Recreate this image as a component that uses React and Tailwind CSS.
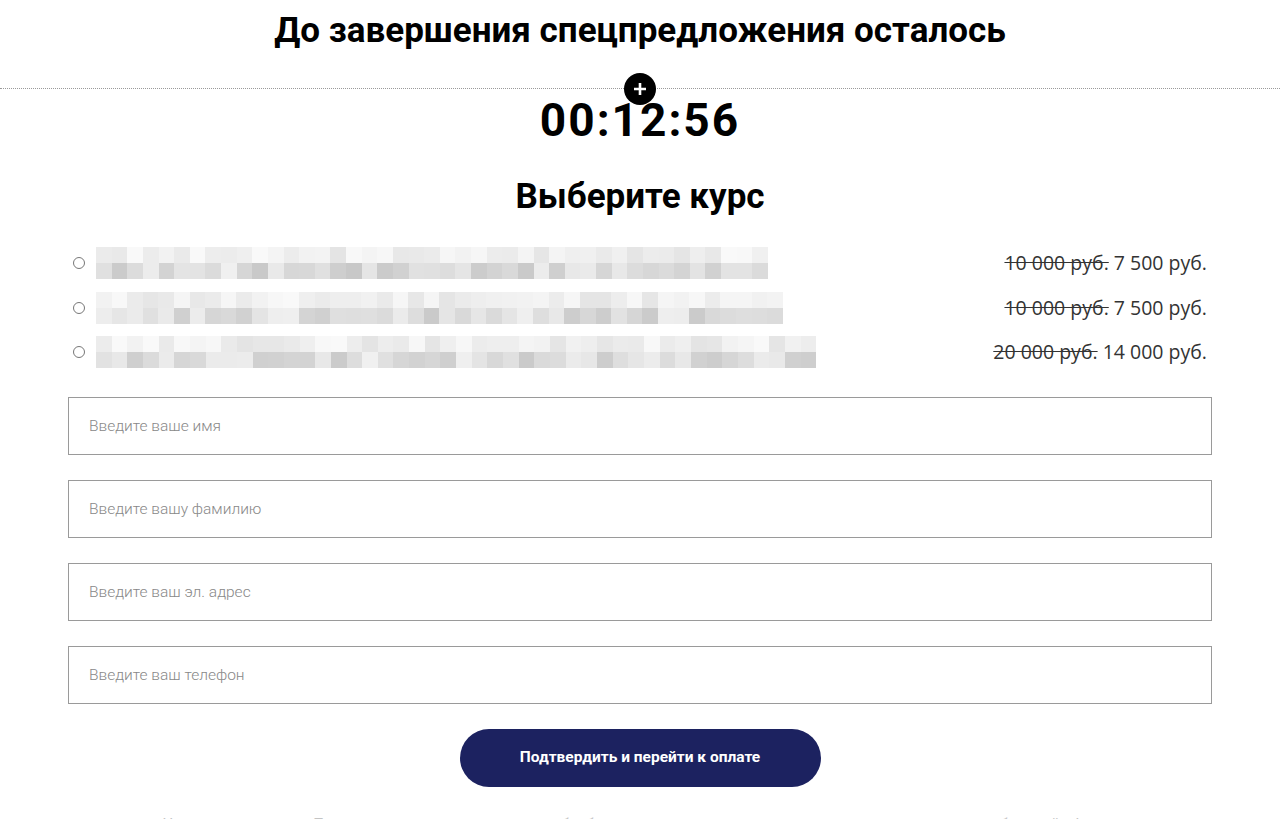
import { useState } from "react";

const courses = [
  { id: 1, width: 672, oldPrice: "10 000 руб.", price: "7 500 руб.", seed: 3 },
  { id: 2, width: 687, oldPrice: "10 000 руб.", price: "7 500 руб.", seed: 11 },
  { id: 3, width: 720, oldPrice: "20 000 руб.", price: "14 000 руб.", seed: 29 },
];

// pseudo-random greys for the pixelated (blurred) course titles
const shades = (seed, count, base, spread) => {
  const out = [];
  let s = seed;
  for (let i = 0; i < count; i++) {
    s = (s * 9301 + 49297) % 233280;
    const v = Math.round(base + (s / 233280) * spread);
    out.push(`rgb(${v},${v},${v})`);
  }
  return out;
};

const Pixelated = ({ width, seed }) => {
  const cols = Math.round(width / 15.5);
  const top = shades(seed, cols, 228, 22);
  const bottom = shades(seed + 7, cols, 200, 40);
  return (
    <div className="flex flex-col" style={{ width }}>
      <div className="flex h-[16px]">
        {top.map((c, i) => (
          <div key={i} className="flex-1" style={{ background: c }} />
        ))}
      </div>
      <div className="flex h-[16px]">
        {bottom.map((c, i) => (
          <div key={i} className="flex-1" style={{ background: c }} />
        ))}
      </div>
    </div>
  );
};

const Field = ({ placeholder }) => (
  <input
    type="text"
    placeholder={placeholder}
    className="w-full h-[58px] border border-[#9a9a9a] px-5 text-[15.5px] font-light text-[#555] placeholder:text-[#888] outline-none"
  />
);

const App = () => {
  const [selected, setSelected] = useState(null);

  return (
    <div className="min-h-screen bg-white font-['Roboto',sans-serif] text-black overflow-hidden">
      <h1 className="text-center text-[35px] font-bold leading-none pt-[13px]">
        До завершения спецпредложения осталось
      </h1>

      <div className="relative mt-[40px] border-t border-dotted border-[#9a9a9a]">
        <div className="absolute left-1/2 -translate-x-1/2 -top-[16px] w-8 h-8 rounded-full bg-black flex items-center justify-center">
          <svg width="16" height="16" viewBox="0 0 16 16">
            <path d="M8 2v12M2 8h12" stroke="white" strokeWidth="2.6" />
          </svg>
        </div>
      </div>

      <div className="text-center text-[46px] font-bold leading-none mt-[8px] tracking-[2px]">
        00:12:56
      </div>

      <h2 className="text-center text-[35px] font-bold leading-none mt-[36px]">
        Выберите курс
      </h2>

      <div className="w-[1144px] mx-auto mt-[33px]">
        <div className="flex flex-col gap-[12.5px]">
          {courses.map((c) => (
            <label key={c.id} className="flex items-center cursor-pointer">
              <span
                onClick={() => setSelected(c.id)}
                className="ml-[5px] w-[12px] h-[12px] rounded-full border border-[#777] flex items-center justify-center shrink-0"
              >
                {selected === c.id && <span className="w-[6px] h-[6px] rounded-full bg-[#333]" />}
              </span>
              <div className="ml-[11px]">
                <Pixelated width={c.width} seed={c.seed} />
              </div>
              <div className="ml-auto mr-[5px] font-['Open_Sans',sans-serif] text-[19.5px] text-[#333]">
                <span className="line-through">{c.oldPrice}</span> {c.price}
              </div>
            </label>
          ))}
        </div>

        <form className="mt-[29px] flex flex-col gap-[25px]" onSubmit={(e) => e.preventDefault()}>
          <Field placeholder="Введите ваше имя" />
          <Field placeholder="Введите вашу фамилию" />
          <Field placeholder="Введите ваш эл. адрес" />
          <Field placeholder="Введите ваш телефон" />

          <div className="flex justify-center">
            <button
              type="submit"
              className="w-[361px] h-[58px] rounded-full bg-[#1c2260] text-white text-[15.5px] font-bold"
            >
              Подтвердить и перейти к оплате
            </button>
          </div>
        </form>

        <p className="text-center text-[15px] leading-[22px] text-[#c4c4c4] mt-[26px]">
          Нажимая на кнопку «Подтвердить», я даю согласие на обработку моих персональных данных и принимаю условия публичной оферты
        </p>
      </div>
    </div>
  );
};

export default App;
